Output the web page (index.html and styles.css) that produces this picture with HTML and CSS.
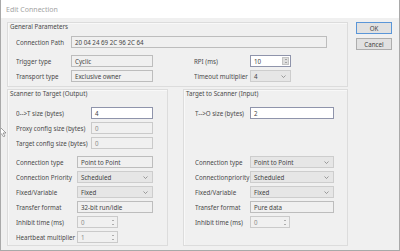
FILE: index.html
```html
<!DOCTYPE html>
<html>
<head>
	<title>Edit Connection</title>
	<meta charset="UTF-8">
	<link rel="stylesheet" href="styles.css">
</head>
<body>
	<div class="window">
		<div class="titlebar">Edit Connection</div>
		<div class="client">
			<div class="groups">
				<div class="group general">
					<div class="caption">General Parameters</div>
					<div class="row path">
						<span class="label w55">Connection Path</span>
						<div class="field ro wpath">20 04 24 69 2C 96 2C 64</div>
					</div>
					<div class="row gap7">
						<span class="label w55">Trigger type</span>
						<div class="field ro w82">Cyclic</div>
						<span class="label w56 lpad">RPI (ms)</span>
						<div class="field edit spin w41">10<span class="arrows dark"><i class="up"></i><i class="down"></i></span></div>
					</div>
					<div class="row">
						<span class="label w55">Transport type</span>
						<div class="field ro w82">Exclusive owner</div>
						<span class="label w56 lpad">Timeout multiplier</span>
						<div class="field combo w41">4<svg class="chev" width="5" height="3" viewBox="0 0 5 3"><path d="M0.5 0.5 L2.5 2.5 L4.5 0.5" fill="none" stroke="#777" stroke-width="0.7"/></svg></div>
					</div>
				</div>

				<div class="io">
					<div class="group scanner">
						<div class="caption">Scanner to Target (Output)</div>
						<div class="upper">
							<div class="row">
								<span class="label w75">0--&gt;T size (bytes)</span>
								<div class="field edit w62">4</div>
							</div>
							<div class="row">
								<span class="label w75">Proxy config size (bytes)</span>
								<div class="field ro dim w62">0</div>
							</div>
							<div class="row">
								<span class="label w75">Target config size (bytes)</span>
								<div class="field ro dim w62">0</div>
							</div>
						</div>
						<div class="lower">
							<div class="row">
								<span class="label w61">Connection type</span>
								<div class="field ro w76">Point to Point</div>
							</div>
							<div class="row">
								<span class="label w61">Connection Priority</span>
								<div class="field combo w76">Scheduled<svg class="chev" width="5" height="3" viewBox="0 0 5 3"><path d="M0.5 0.5 L2.5 2.5 L4.5 0.5" fill="none" stroke="#777" stroke-width="0.7"/></svg></div>
							</div>
							<div class="row">
								<span class="label w61">Fixed/Variable</span>
								<div class="field combo w76">Fixed<svg class="chev" width="5" height="3" viewBox="0 0 5 3"><path d="M0.5 0.5 L2.5 2.5 L4.5 0.5" fill="none" stroke="#777" stroke-width="0.7"/></svg></div>
							</div>
							<div class="row">
								<span class="label w61">Transfer format</span>
								<div class="field ro w76">32-bit run/idle</div>
							</div>
							<div class="row">
								<span class="label w61">Inhibit time (ms)</span>
								<div class="field ro dim spin w41">0<span class="arrows"><i class="up"></i><i class="down"></i></span></div>
							</div>
							<div class="row">
								<span class="label w61">Heartbeat multiplier</span>
								<div class="field ro dim spin w41">1<span class="arrows"><i class="up"></i><i class="down"></i></span></div>
							</div>
						</div>
					</div>

					<div class="group target">
						<div class="caption">Target to Scanner (Input)</div>
						<div class="upper">
							<div class="row">
								<span class="label w55">T--&gt;O size (bytes)</span>
								<div class="field edit w84">2</div>
							</div>
						</div>
						<div class="lower">
							<div class="row">
								<span class="label w55">Connection type</span>
								<div class="field combo w84">Point to Point<svg class="chev" width="5" height="3" viewBox="0 0 5 3"><path d="M0.5 0.5 L2.5 2.5 L4.5 0.5" fill="none" stroke="#777" stroke-width="0.7"/></svg></div>
							</div>
							<div class="row">
								<span class="label w55">Connectionpriority</span>
								<div class="field combo w84">Scheduled<svg class="chev" width="5" height="3" viewBox="0 0 5 3"><path d="M0.5 0.5 L2.5 2.5 L4.5 0.5" fill="none" stroke="#777" stroke-width="0.7"/></svg></div>
							</div>
							<div class="row">
								<span class="label w55">Fixed/Variable</span>
								<div class="field combo w84">Fixed<svg class="chev" width="5" height="3" viewBox="0 0 5 3"><path d="M0.5 0.5 L2.5 2.5 L4.5 0.5" fill="none" stroke="#777" stroke-width="0.7"/></svg></div>
							</div>
							<div class="row">
								<span class="label w55">Transfer format</span>
								<div class="field ro w84">Pure data</div>
							</div>
							<div class="row">
								<span class="label w55">Inhibit time (ms)</span>
								<div class="field ro dim spin w40">0<span class="arrows"><i class="up"></i><i class="down"></i></span></div>
							</div>
						</div>
					</div>
				</div>
			</div>

			<div class="buttons">
				<button type="button" class="btn default">OK</button>
				<button type="button" class="btn">Cancel</button>
			</div>
		</div>

		<svg class="cursor" width="8" height="12" viewBox="0 0 8 12">
			<path d="M-2 0 L6 8 L3 8 L5 11 L3.5 11.8 L1.5 8.8 L-2 11 Z" fill="#fff" stroke="#666" stroke-width="0.6"/>
		</svg>
	</div>
</body>
</html>
```

FILE: styles.css
```css
body {
	margin: 0;
	background: #ffffff;
	font-family: "Noto Sans", "Open Sans", sans-serif;
	font-size: 6.2px;
	color: #4a4a4a;
}

.window {
	position: relative;
	width: 400px;
	height: 251px;
	box-sizing: border-box;
	border: 1px solid #a9a9a9;
	border-top: none;
	background: #f0f0f0;
	display: flex;
	flex-direction: column;
	overflow: hidden;
}

.titlebar {
	height: 18px;
	flex: none;
	background: #ffffff;
	color: #a3a3a3;
	font-size: 7px;
	padding-left: 5px;
	display: flex;
	align-items: center;
}

.client {
	display: flex;
	gap: 8px;
	padding: 4px 0 0 6px;
}

.groups {
	width: 341px;
}

.group {
	box-sizing: border-box;
	border: 1px solid #dcdcdc;
	box-shadow: inset 1px 1px 0 #f8f8f8;
}

.caption {
	height: 8px;
	line-height: 8px;
	padding-left: 2px;
	white-space: nowrap;
}

.general {
	height: 65px;
}

.general .caption {
	margin-bottom: 5px;
}

.general .row {
	padding-left: 8px;
}

.io {
	display: flex;
	gap: 15px;
	margin-top: 2px;
}

.scanner {
	width: 161px;
	height: 157px;
}

.target {
	width: 165px;
	height: 157px;
}

.scanner .caption,
.target .caption {
	margin-bottom: 9px;
}

.scanner .row {
	padding-left: 8px;
}

.target .row {
	padding-left: 11px;
}

.upper {
	height: 42px;
	margin-bottom: 7px;
}

.row {
	display: flex;
	align-items: center;
	height: 12px;
	margin-bottom: 3px;
}

.row.path {
	margin-bottom: 7px;
}

.label {
	flex: none;
	white-space: nowrap;
	overflow: hidden;
}

.lpad { margin-left: 41px; }

.w40 { width: 40px; }
.w41 { width: 41px; }
.w55 { width: 55px; }
.w56 { width: 56px; }
.w61 { width: 61px; }
.w62 { width: 62px; }
.w75 { width: 75px; }
.w76 { width: 76px; }
.w82 { width: 82px; }
.w84 { width: 84px; }
.wpath { width: 256px; }

.field {
	flex: none;
	height: 12px;
	box-sizing: border-box;
	border: 1px solid #bdbdbd;
	background: #f0f0f0;
	padding-left: 3px;
	display: flex;
	align-items: center;
	white-space: nowrap;
	color: #444444;
}

.field.edit {
	background: #ffffff;
	border-color: #8f94ab;
}

.field.dim {
	color: #8c8c8c;
	border-color: #cacaca;
}

.field.combo {
	background: #e6e6e6;
	border-color: #cdcdcd;
	justify-content: space-between;
	padding-right: 4px;
}

.chev {
	flex: none;
}

.field.spin {
	justify-content: space-between;
	padding-right: 1px;
}

.arrows {
	width: 7px;
	height: 8px;
	display: flex;
	flex-direction: column;
	justify-content: space-around;
	align-items: center;
}

.arrows.dark {
	background: #dedede;
	border: 1px solid #c4c4c4;
	box-sizing: border-box;
}

.arrows i {
	width: 0;
	height: 0;
	border-left: 1.5px solid transparent;
	border-right: 1.5px solid transparent;
}

.arrows .up {
	border-bottom: 1.5px solid #6a6a6a;
}

.arrows .down {
	border-top: 1.5px solid #6a6a6a;
}

.buttons {
	display: flex;
	flex-direction: column;
	gap: 4px;
}

.btn {
	width: 36px;
	height: 12px;
	padding: 0;
	margin: 0;
	border: 1px solid #adadad;
	background: #e1e1e1;
	font-family: "Noto Sans", "Open Sans", sans-serif;
	font-size: 6.2px;
	color: #444444;
}

.btn.default {
	border-color: #5a96d8;
}

.cursor {
	position: absolute;
	left: -1px;
	top: 125px;
}
```
